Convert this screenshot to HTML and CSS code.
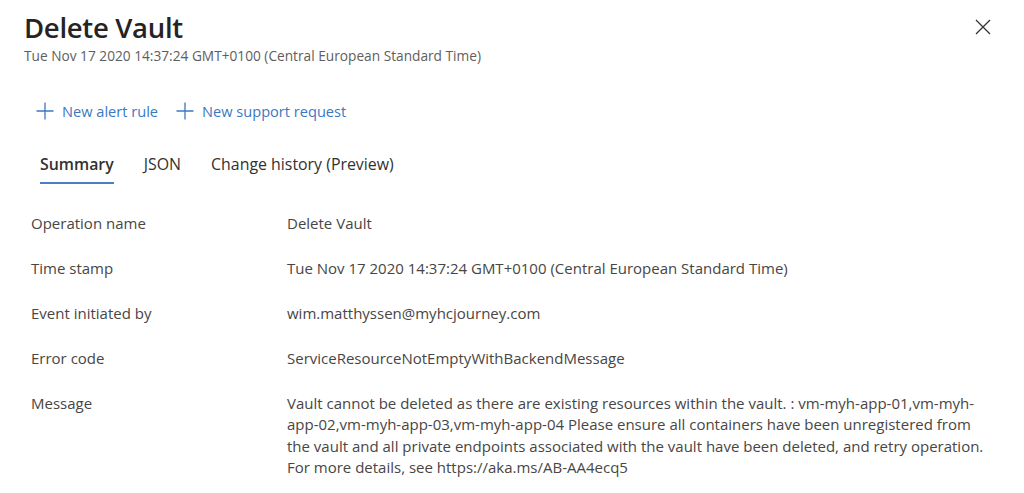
FILE: index.html
```html
<!DOCTYPE html>
<html lang="en">
<head>
<meta charset="utf-8">
<title>Delete Vault</title>
<link rel="stylesheet" href="styles.css">
</head>
<body>
<div class="panel">
  <header class="head">
    <div class="titles">
      <h1 class="title">Delete Vault</h1>
      <div class="subtitle">Tue Nov 17 2020 14:37:24 GMT+0100 (Central European Standard Time)</div>
    </div>
    <button class="close" aria-label="Close">
      <svg width="16" height="16" viewBox="0 0 16 16"><path d="M1 1 L15 15 M15 1 L1 15" stroke="#333" stroke-width="1.3" fill="none"/></svg>
    </button>
  </header>

  <div class="actions">
    <a class="action">
      <svg width="18" height="18" viewBox="0 0 18 18"><path d="M9 0.5 V17.5 M0.5 9 H17.5" stroke="#3b78c2" stroke-width="1.3" fill="none"/></svg>
      <span>New alert rule</span>
    </a>
    <a class="action">
      <svg width="18" height="18" viewBox="0 0 18 18"><path d="M9 0.5 V17.5 M0.5 9 H17.5" stroke="#3b78c2" stroke-width="1.3" fill="none"/></svg>
      <span>New support request</span>
    </a>
  </div>

  <nav class="tabs">
    <a class="tab active">Summary</a>
    <a class="tab">JSON</a>
    <a class="tab">Change history (Preview)</a>
  </nav>

  <dl class="details">
    <div class="row"><dt>Operation name</dt><dd>Delete Vault</dd></div>
    <div class="row"><dt>Time stamp</dt><dd>Tue Nov 17 2020 14:37:24 GMT+0100 (Central European Standard Time)</dd></div>
    <div class="row"><dt>Event initiated by</dt><dd>wim.matthyssen@myhcjourney.com</dd></div>
    <div class="row"><dt>Error code</dt><dd>ServiceResourceNotEmptyWithBackendMessage</dd></div>
    <div class="row"><dt>Message</dt><dd class="msg">Vault cannot be deleted as there are existing resources within the vault. : vm-myh-app-01,vm-myh-app-02,vm-myh-app-03,vm-myh-app-04 Please ensure all containers have been unregistered from the vault and all private endpoints associated with the vault have been deleted, and retry operation. For more details, see https://aka.ms/AB-AA4ecq5</dd></div>
  </dl>
</div>
</body>
</html>
```

FILE: styles.css
```css
html, body {
  margin: 0;
  padding: 0;
  background: #ffffff;
}
body {
  font-family: "Open Sans", "Noto Sans", "Liberation Sans", sans-serif;
  color: #323130;
}
.panel {
  width: 1024px;
  height: 493px;
  overflow: hidden;
  box-sizing: border-box;
  padding: 11px 0 0 24px;
}
.head {
  display: flex;
  justify-content: space-between;
  align-items: flex-start;
}
.title {
  margin: 0;
  font-size: 27.5px;
  font-weight: 600;
  line-height: 34px;
  color: #252423;
  letter-spacing: -0.3px;
}
.subtitle {
  font-size: 13.7px;
  line-height: 18px;
  color: #605e5c;
  margin-top: 2px;
}
.close {
  border: 0;
  background: none;
  padding: 0;
  margin: 8px 33px 0 0;
  width: 16px;
  height: 16px;
  display: flex;
}
.actions {
  display: flex;
  gap: 18px;
  margin: 36px 0 0 12px;
}
.action {
  display: flex;
  align-items: center;
  gap: 8px;
  color: #3b78c2;
  font-size: 14.6px;
  line-height: 20px;
}
.tabs {
  display: flex;
  gap: 30px;
  margin: 26px 0 0 16px;
}
.tab {
  font-size: 15.9px;
  line-height: 20px;
  padding: 7px 0 8px;
  color: #323130;
  border-bottom: 2px solid transparent;
}
.tab.active {
  font-weight: 600;
  border-bottom-color: #4a7fc4;
}
.details {
  margin: 29px 0 0 7px;
}
.row {
  display: grid;
  grid-template-columns: 256px 700px;
  min-height: 45px;
  font-size: 15px;
  line-height: 21.3px;
}
.row dt, .row dd {
  margin: 0;
  color: #484644;
}
```
